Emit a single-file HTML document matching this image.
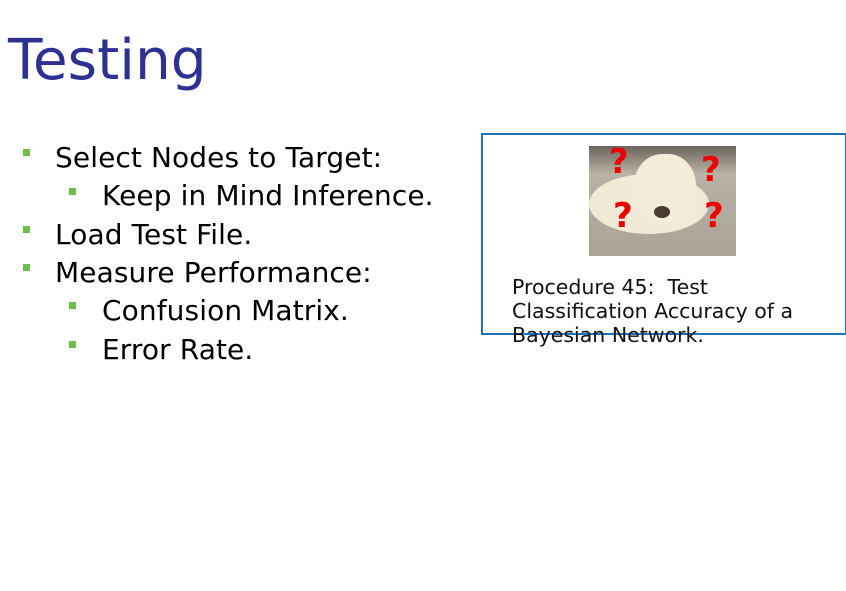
<!DOCTYPE html>
<html><head><style>
body{margin:0;width:846px;height:591px;background:#fff;position:relative;overflow:hidden;font-family:"DejaVu Sans","Liberation Sans",sans-serif;}
.t{position:absolute;white-space:nowrap;line-height:1}
.l{font-size:28px;letter-spacing:0.1px}
.b{position:absolute;width:7px;height:7px;background:#6cbf4a}
</style></head><body>
<div class="t" style="left:8px;top:33px;font-size:56.5px;color:#2e3192">Testing</div>
<div class="b" style="left:23px;top:149px"></div>
<div class="t l" style="left:55px;top:144px">Select Nodes to Target:</div>
<div class="b" style="left:69px;top:188px"></div>
<div class="t l" style="left:102px;top:182px">Keep in Mind Inference.</div>
<div class="b" style="left:23px;top:226px"></div>
<div class="t l" style="left:55px;top:221px">Load Test File.</div>
<div class="b" style="left:23px;top:264px"></div>
<div class="t l" style="left:55px;top:259px">Measure Performance:</div>
<div class="b" style="left:69px;top:302px"></div>
<div class="t l" style="left:102px;top:297px">Confusion Matrix.</div>
<div class="b" style="left:69px;top:341px"></div>
<div class="t l" style="left:102px;top:336px">Error Rate.</div>
<div style="position:absolute;left:481px;top:133px;width:362px;height:198px;border:2px solid #1a75bf"></div>
<div style="position:absolute;left:589px;top:146px;width:147px;height:110px;background:linear-gradient(180deg,#6a645c 0%,#b8b2a6 25%,#aaa398 100%);overflow:hidden">
<div style="position:absolute;left:0;top:28px;width:120px;height:60px;border-radius:50%;background:#f1ead6"></div>
<div style="position:absolute;left:45px;top:8px;width:62px;height:70px;border-radius:45%;background:#f3ecd8"></div>
<div style="position:absolute;left:65px;top:60px;width:16px;height:12px;border-radius:50%;background:#4a3a34"></div>
<span style="position:absolute;left:20px;top:-4px;font:bold 34px 'DejaVu Sans';color:#e00">?</span>
<span style="position:absolute;left:112px;top:4px;font:bold 34px 'DejaVu Sans';color:#e00">?</span>
<span style="position:absolute;left:24px;top:50px;font:bold 34px 'DejaVu Sans';color:#e00">?</span>
<span style="position:absolute;left:115px;top:50px;font:bold 34px 'DejaVu Sans';color:#e00">?</span>
</div>
<div class="t" style="left:512px;top:275px;font-size:20.5px;line-height:24px;color:#111">Procedure 45:&nbsp; Test<br>Classification Accuracy of a<br>Bayesian Network.</div>
</body></html>
